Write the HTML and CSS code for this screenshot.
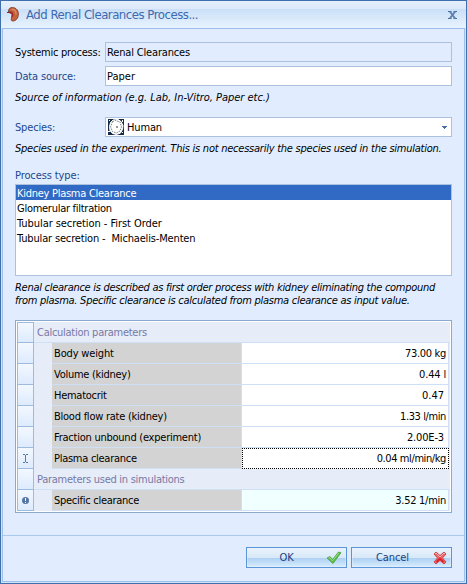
FILE: index.html
```html
<!DOCTYPE html>
<html lang="en">
<head>
<meta charset="utf-8">
<title>Add Renal Clearances Process</title>
<link rel="stylesheet" href="styles.css">
</head>
<body>
<div class="window">
  <header class="titlebar">
    <svg class="kidney" width="12" height="15" viewBox="0 0 12 15"><path d="M3.500.8C8-.3 11.400 2.500 11.400 7c0 4-2.400 7-5.500 7-1.800 0-2-1.500-1.400-3L5 7 2 5.500C1.300 4 1.500 1.700 3.500.8z" fill="#c4623d" stroke="#85402b" stroke-width=".9"/><path d="M4.500 2.500c3-.6 4.800 1.800 4.500 5" fill="none" stroke="#dc8e67" stroke-width="1.200"/><path d="M0 5.500l4.500-.3 1.300 2-.3 2.500" fill="none" stroke="#9b2324" stroke-width="1.200"/><path d="M1 4l2 .8" stroke="#49567f"/></svg>
    <h1>Add Renal Clearances Process...</h1>
    <svg class="close" width="9" height="8" viewBox="0 0 9 8"><path d="M0 .5h3.500M5.500.5H9M0 7.500h3.500M5.500 7.500H9" stroke="#4a6995"/><path d="M1.800.5l5.400 7M7.200.5l-5.400 7" stroke="#5c7fae" stroke-width="1.800"/></svg>
  </header>
  <main class="panel">
    <div class="content">
      <div class="field"><span class="label dark snug">Systemic process:</span><div class="input readonly slight">Renal Clearances</div></div>
      <div class="field second"><span class="label slight">Data source:</span><div class="input">Paper</div></div>
      <p class="note n-source">Source of information (e.g. Lab, In-Vitro, Paper etc.)</p>
      <div class="field species"><span class="label slight">Species:</span><div class="input select">
        <svg width="16" height="16" viewBox="0 0 16 16"><path fill="#152c49" d="M0 0h16v16H0z"/><path d="M5 1l5-.5 3 2 2 4-.5 4-2 3.500-4 1.500-4-1-2.500-3-.5-4 1-4z" fill="#fff" stroke="#fff"/><path d="M4.500 2.500l3-1 4.500 1.500 1.500 5-1.500 4-3.500 2-4-1.500-2-4.500z" fill="none" stroke="#555" stroke-width=".8" stroke-dasharray="1.500 1"/><path d="M8.500 7h1v2h-1z" fill="#333"/><path d="M1 1h1v1H1zM0 12h2v1H0zM14 1h1v2h-1zM14 13h1v1h-1z" fill="#fff"/></svg>
        <span>Human</span><svg class="arrow" width="5" height="3" viewBox="0 0 5 3"><path d="M0 0h5v1H4v1H3v1H2V2H1V1H0z" fill="#4471ad"/></svg></div></div>
      <p class="note n-species snug">Species used in the experiment. This is not necessarily the species used in the simulation.</p>
      <div class="label type-label">Process type:</div>
      <ul class="list">
        <li class="selected tight">Kidney Plasma Clearance</li><li class="tight">Glomerular filtration</li><li class="loose">Tubular secretion - First Order</li><li class="slight">Tubular secretion -&nbsp; Michaelis-Menten</li>
      </ul>
      <p class="note n-desc tight">Renal clearance is described as first order process with kidney eliminating the compound<br>from plasma. Specific clearance is calculated from plasma clearance as input value.</p>
      <div class="grid">
        <div class="row category"><i class="marker"></i><span class="tight">Calculation parameters</span></div>
        <div class="row"><i class="marker"></i><span class="name slight">Body weight</span><span class="value wide-words">73.00 kg</span></div>
        <div class="row"><i class="marker"></i><span class="name tight">Volume (kidney)</span><span class="value slight">0.44 l</span></div>
        <div class="row"><i class="marker"></i><span class="name tight">Hematocrit</span><span class="value unitless">0.47</span></div>
        <div class="row"><i class="marker"></i><span class="name snug">Blood flow rate (kidney)</span><span class="value values-tight">1.33 l/min</span></div>
        <div class="row"><i class="marker"></i><span class="name snug">Fraction unbound (experiment)</span><span class="value unitless slight">2.00E-3</span></div>
        <div class="row"><i class="marker"><svg width="5" height="9" viewBox="0 0 5 9"><path d="M0 .5h2M3 .5h2M2.500 1v7M0 8.500h2M3 8.500h2" stroke="#5877a5" fill="none"/></svg></i><span class="name tight">Plasma clearance</span><span class="value focused values-tight">0.04 ml/min/kg</span></div>
        <div class="row category"><i class="marker"></i><span class="tight">Parameters used in simulations</span></div>
        <div class="row"><i class="marker"><svg width="7" height="7" viewBox="0 0 7 7"><circle cx="3.500" cy="3.500" r="3.500" fill="#5575a6"/><path d="M3 1h1v3H3zM3 5h1v1H3z" fill="#fff"/></svg></i><span class="name tight">Specific clearance</span><span class="value result tight">3.52 1/min</span></div>
      </div>
    </div>
    <footer class="footer">
      <button><span>OK</span><svg width="16" height="14" viewBox="0 0 16 14"><path d="M1 7l3-1.500 2.500 3L12.500 1l2.500.7L7 12.500z" fill="#55bd43" stroke="#45963b" stroke-width=".7"/><path d="M2.500 7.200l1.300-.5 2.700 3.200L12.800 2" fill="none" stroke="#a8e590" stroke-width=".9"/></svg></button>
      <button><span>Cancel</span><svg width="14" height="14" viewBox="0 0 14 14"><path d="M1 3l2-2 4 3.500L11 1l2 2-3.500 4 3.500 4-2 2-4-3.500L3 13l-2-2 3.500-4z" fill="#ed6667" stroke="#c93037" stroke-width=".8" stroke-linejoin="round"/><path d="M2 3l1-1 4 4 4-4 1 1" fill="none" stroke="#f8b3ad"/><path d="M3.500 11L7 7.500l3.500 3.500" fill="none" stroke="#dc2229" stroke-width="1.800"/></svg></button>
    </footer>
  </main>
</div>
</body>
</html>
```
FILE: styles.css
```css
* { box-sizing: border-box; }
body { margin: 0; font: 11px/13px "DejaVu Sans Condensed", "DejaVu Sans", sans-serif; font-stretch: condensed; color: #000; white-space: nowrap; }
.window { width: 467px; height: 584px; border: 1px solid #3f70ad; background: #cfe2fa; display: flex; flex-direction: column; }
.titlebar { height: 27px; flex: none; display: flex; align-items: center; padding: 0 9px 0 6px; background: linear-gradient(#e5effc 0, #dce9fa 8px, #cadff7 8px, #e8f3fe 100%); }
.kidney { margin-right: 7px; }
h1 { margin: 0; font-size: 13px; line-height: 16px; font-weight: 400; color: #3d6ab0; letter-spacing: -.47px; }
.close { margin-left: auto; }
.panel { flex: 1; margin: 0 1px 1px; border: 1px solid #9dbfe8; background: #e1edfe; display: flex; flex-direction: column; }
.content { height: 506px; padding: 13px 12px 0; }
.field { display: flex; height: 20px; align-items: center; }
.second { margin-top: 4px; }
.label { width: 90px; color: #1d478f; }
.label.dark { color: #000; }
.loose { letter-spacing: -.06px; }
.slight { letter-spacing: -.16px; }
.snug { letter-spacing: -.24px; }
.tight { letter-spacing: -.27px; }
.values-tight { letter-spacing: -.4px; }
.wide-words { letter-spacing: -.3px; }
.input { flex: 1; height: 20px; padding: 3px 1px; border: 1px solid #abc1de; background: #fff; }
.readonly { background: #e1edfe; }
.note { margin: 0; font-style: italic; }
.n-source { margin-top: 5px; letter-spacing: -.03px; }
.species { margin-top: 13px; }
.select { display: flex; align-items: center; padding: 0 4px 0 2px; }
.select span { margin-left: 3px; letter-spacing: -.16px; }
.arrow { margin-left: auto; }
.n-species { margin-top: 5px; }
.type-label { margin-top: 14px; letter-spacing: -.1px; }
.list { list-style: none; margin: 2px 0 0; padding: 0; height: 92px; border: 1px solid #abc1de; background: #fff; }
.list li { height: 15px; line-height: 17px; padding-left: 1px; }
.selected { background: #316ac5; color: #fff; }
.n-desc { margin-top: 5px; }
.grid { margin-top: 13px; height: 193px; border: 1px solid #8ca9cf; background: #fff; padding: 1px; }
.row { display: flex; height: 21px; background: #e6ecf8; padding-right: 1px; }
.marker { width: 17px; flex: none; border: 1px solid #9dbbdd; border-top: 0; background: linear-gradient(#f3f8ff, #ddebfd); display: flex; align-items: center; justify-content: center; margin-right: 18px; }
.row:first-child .marker { border-top: 1px solid #9dbbdd; }
.category { color: #7779a5; line-height: 22px; border-bottom: 1px solid #cde0f5; }
.category .marker { margin-right: 3px; height: 21px; }
.name, .value { height: 21px; line-height: 22px; border-bottom: 1px solid #cde0f5; }
.name { width: 190px; padding-left: 2px; background: #d3d3d3; border-right: 1px solid #cde0f5; }
.value { flex: 1; padding-right: 2px; text-align: right; background: #fff; border-right: 1px solid #cde0f5; }
.unitless { padding-right: 4px; }
.value.focused { border: 1px dotted #000; line-height: 20px; }
.result { background: #f0ffff; }
.footer { flex: 1; border-top: 1px solid #a9c9ef; display: flex; gap: 4px; justify-content: flex-end; padding: 11px 12px 0; }
button { width: 101px; height: 21px; padding: 0 4px 0 0; border: 1px solid #5b94d7; font: inherit; color: #1a3f82; background: linear-gradient(#e9f2fb 0, #d8e8f8 10px, #abcff3 10px, #d8edfd 100%); box-shadow: inset 0 0 0 1px #eef6ff66; display: flex; align-items: center; letter-spacing: -.1px; }
button span { flex: 1; text-align: center; }
```
